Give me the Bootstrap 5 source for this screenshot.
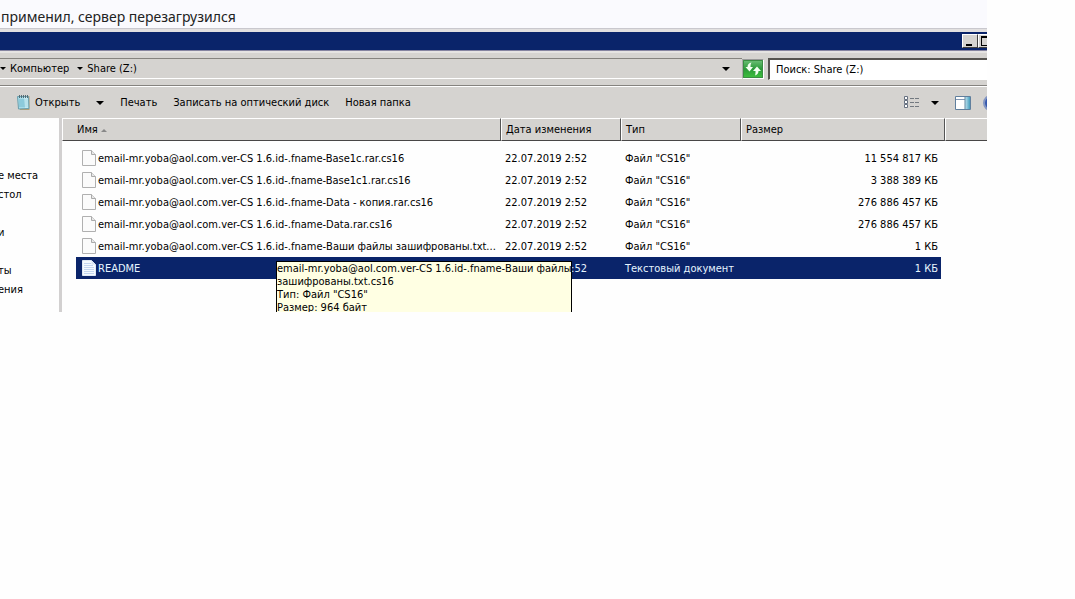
<!DOCTYPE html>
<html lang="ru">
<head>
<meta charset="utf-8">
<meta name="viewport" content="width=device-width, initial-scale=1">
<title>Share (Z:)</title>
<link rel="stylesheet" href="https://cdn.jsdelivr.net/npm/bootstrap@5.3.0/dist/css/bootstrap.min.css">
<script src="https://cdn.jsdelivr.net/npm/bootstrap@5.3.0/dist/js/bootstrap.bundle.min.js"></script>
<style>
  :root { --face: #d5d3d0; --navy: #0a246a; }
  body { background: #fefefe; color: #000; padding-right: 88px; font: 11px/13px "DejaVu Sans Condensed", "Noto Sans", sans-serif; }
  button { font: inherit; color: inherit; line-height: 13px; }
  .post-text { height: 28px; padding: 5px 1px 3px; background: #fafafe; color: #222; font: 14px/24px "Noto Sans", sans-serif; }
  .explorer { background: var(--face); border-top: 1px solid #c9c8ce; }
  .title-strip { height: 22px; background: var(--navy); border-top: 3px solid #e2e0e0; border-bottom: 1px solid #8584a0; box-sizing: border-box; }
  .win-btn { width: 16px; height: 14px; background: var(--face); border: 1px solid; border-color: #fff #404040 #404040 #fff; }
  .win-btn.cut { width: 9px; border-right: 0; }
  .address-row { height: 35px; border-top: 2px solid #e5e3e2; border-bottom: 1px solid #85837f; padding: 5px 0 6px; }
  .address-box { border-top: 1px solid #85837f; border-bottom: 1px solid #fff; }
  .plain-btn { background: none; border: 0; padding: 0; }
  .go-btn { width: 22px; height: 20px; border: 1px solid #fff; border-top-color: #999; border-left-color: #aaa; background: #fff; }
  .search-box { width: 219px; height: 22px; border: 1px solid #85837f; border-top: 2px solid #55534f; border-left: 2px solid #55534f; border-right: 0; border-bottom-color: #fff; border-radius: 0; padding: 0 6px; background: #fff; color: #000; font: inherit; }
  .search-box::placeholder { color: #000; opacity: 1; }
  .tool-row { height: 32px; border-top: 1px solid #fff; }
  .caret-down { width: 0; height: 0; border: 4px solid transparent; border-top-color: #000; border-bottom: 0; }
  .caret-down.tiny { border-width: 3px 3px 0; }
  .side-list { width: 59px; padding-top: 48px; background: #fefefe; line-height: 19px; }
  .side-list a { display: block; height: 19px; margin-left: -2px; color: #000; text-decoration: none; white-space: nowrap; }
  .file-pane { background: #fefefe; border-left: 3px solid #d2d0d0; padding-bottom: 33px; }
  .file-table { table-layout: fixed; border-collapse: separate; border-spacing: 0; }
  .file-table th { height: 23px; padding: 0 4px; font-weight: 400; background: var(--face); border: 1px solid; border-color: #fff #555 #484646 #fff; }
  .file-table th:first-child { padding-left: 14px; }
  .file-table th:last-child { border-right: 0; }
  .file-table td { height: 22px; padding: 0 4px; white-space: nowrap; overflow: hidden; text-overflow: ellipsis; }
  .file-table td.lead-gap { padding: 0; }
  .file-table td.size-cell { text-align: right; padding-right: 3px; }
  .file-table .spacer td { height: 6px; }
  .file-table .chosen td:not(.lead-gap) { background: var(--navy); color: #e6f4ff; }
  .file-table svg { display: inline-block; vertical-align: middle; }
  .file-table td svg { margin: 0 2px 0 6px; }
  .file-table td.name-cell { padding-left: 0; padding-right: 0; }
  .file-table td.name-cell > span { display: flex; align-items: center; }
  .file-tip { top: 143px; left: 214px; width: 296px; background: #ffffe3; border: 1px solid #000; padding-bottom: 8px; }
</style>
</head>
<body>
<svg width="0" height="0" class="position-absolute" aria-hidden="true">
  <symbol id="blank" viewBox="0 0 14 16"><path d="M.5.5h9l4 4v11H.5z" fill="#fbfbfb" stroke="#b0b0b0"/><path d="M9.500.5v4h4" fill="#e8e8e8" stroke="#aaa"/></symbol>
  <symbol id="text" viewBox="0 0 14 16"><path d="M.5.5h9l4 4v11H.5z" fill="#f4faff" stroke="#dfe9f5"/><path d="M2 3.500h7M2 5.500h9M2 7.500h10M2 9.500h10M2 11.500h10M2 13.500h10" stroke="#c3d6f0"/><path d="M9.500.5v4h4" fill="#d5e2f2"/></symbol>
</svg>
<p class="post-text mb-0 text-nowrap overflow-hidden">применил, сервер перезагрузился</p>
<main class="explorer">
  <div class="title-strip d-flex justify-content-end align-items-center overflow-hidden">
    <button class="win-btn p-0" aria-label="Свернуть"><svg class="d-block" width="14" height="12"><path d="M3 9h6v2H3z"/></svg></button>
    <button class="win-btn cut p-0 overflow-hidden" aria-label="Развернуть"><svg class="d-block" width="14" height="12"><path d="M2 1h10v10H2zM3 3v7h8V3z" fill-rule="evenodd"/></svg></button>
  </div>
  <div class="address-row d-flex align-items-stretch">
    <div class="address-box d-flex align-items-center flex-grow-1 gap-1 pe-2">
      <span class="caret-down tiny"></span>
      <button class="plain-btn">Компьютер</button>
      <span class="caret-down tiny ms-1"></span>
      <button class="plain-btn">Share (Z:)</button>
      <button class="plain-btn ms-auto me-1" aria-label="Предыдущие адреса"><span class="caret-down d-block"></span></button>
    </div>
    <button class="go-btn p-0 me-1 align-self-center" aria-label="Обновить"><svg class="d-block" width="20" height="18" viewBox="0 0 20 18"><defs><linearGradient id="g" x2="0" y2="1"><stop stop-color="#6fc078"/><stop offset=".5" stop-color="#2a9a38"/><stop offset="1" stop-color="#3fc23e"/></linearGradient></defs><path d="M0 0h20v18H0z" fill="url(#g)"/><path d="M.5.5h19v17H.5z" fill="none" stroke="#3b8c43"/><path d="M8.500 2.500C6 3 4.500 4.500 4.500 7H2.500l4 4.500L10 7H7.500c0-2 .2-3 1-4.500zM12 15.500c2.500-.8 3.500-2.500 3.500-4.500h2.500L14 6.500 10 11h2.500c0 2 0 3-.5 4.500z" fill="#f2fff0"/></svg></button>
    <input class="search-box flex-shrink-0" type="text" aria-label="Поиск" placeholder="Поиск: Share (Z:)">
  </div>
  <div class="tool-row d-flex align-items-center text-nowrap overflow-hidden">
    <button class="plain-btn d-flex align-items-center ms-3"><svg class="me-1" width="15" height="17" viewBox="0 0 15 17"><path d="M2 2h11.500v14H4z" fill="#b79f72"/><path d="M1.500 2.500h11l.5 12-10.500.5z" fill="#a6dbe8" stroke="#6b9fad"/><path d="M3 6h9M3 8h9M3 10h9M3 12h9" stroke="#72b9cc"/><path d="M8 3h4v11H9z" fill="#d5f2f7" opacity=".6"/><path d="M3.500 1v3M5.500 1v3M7.500 1v3M9.500 1v3M11.500 1v3" stroke="#536c75"/></svg>Открыть</button>
    <button class="plain-btn px-3" aria-label="Открыть с помощью"><span class="caret-down d-block"></span></button>
    <button class="plain-btn me-3">Печать</button>
    <button class="plain-btn me-3">Записать на оптический диск</button>
    <button class="plain-btn">Новая папка</button>
    <div class="d-flex align-items-center ms-auto">
      <button class="plain-btn" aria-label="Вид"><svg class="d-block" width="15" height="13" viewBox="0 0 15 13"><path d="M.5.5h3v3h-3zM.5 4.500h3v3h-3zM.5 8.500h3v3h-3z" fill="#fff" stroke="#667080"/><path d="M6 2.500h4m1 0h4M6 6.500h4m1 0h4M6 10.500h4m1 0h4" stroke="#737980"/></svg></button>
      <button class="plain-btn ps-2 pe-3 ms-1" aria-label="Другие виды"><span class="caret-down d-block"></span></button>
      <button class="plain-btn" aria-label="Область просмотра"><svg class="d-block" width="16" height="14" viewBox="0 0 16 14"><defs><linearGradient id="b"><stop stop-color="#c4e6f2"/><stop offset="1" stop-color="#459dbd"/></linearGradient></defs><path d="M.5.5h15v13H.5z" fill="#fff" stroke="#607f9d"/><path d="M1 3.500h9" stroke="#8398b4"/><path d="M10 1h5v12h-5z" fill="url(#b)"/><path d="M10 1v12" stroke="#60879f"/></svg></button>
      <button class="plain-btn ps-2 ms-1" aria-label="Справка"><svg class="d-block" width="4" height="16" viewBox="0 0 4 16"><circle cx="8" cy="8" r="7" fill="#3558ad" stroke="#8295c2" stroke-width="2"/></svg></button>
    </div>
  </div>
  <div class="d-flex">
    <nav class="side-list overflow-hidden flex-shrink-0" aria-label="Переходы">
      <a href="#">е места</a><a href="#">стол</a><a href="#" aria-label="Загрузки"></a><a href="#">и</a><a href="#" aria-label="Библиотеки"></a><a href="#">ты</a><a href="#">ения</a>
    </nav>
    <section class="file-pane position-relative overflow-hidden flex-grow-1">
      <table class="file-table w-100">
        <colgroup><col style="width:14px"><col><col style="width:120px"><col style="width:120px"><col style="width:200px"><col style="width:4px"><col style="width:42px"></colgroup>
        <thead><tr><th colspan="2">Имя <svg width="6" height="3"><path d="M0 3l3-3 3 3z" fill="#888"/></svg></th><th>Дата изменения</th><th>Тип</th><th colspan="2">Размер</th><th></th></tr></thead>
        <tbody>
          <tr class="spacer"><td colspan="7"></td></tr>
          <tr><td class="lead-gap"></td><td class="name-cell"><span><svg width="14" height="16"><use href="#blank"/></svg>email-mr.yoba@aol.com.ver-CS 1.6.id-.fname-Base1c.rar.cs16</span></td><td>22.07.2019 2:52</td><td>Файл "CS16"</td><td class="size-cell">11 554 817 КБ</td></tr>
          <tr><td class="lead-gap"></td><td class="name-cell"><span><svg width="14" height="16"><use href="#blank"/></svg>email-mr.yoba@aol.com.ver-CS 1.6.id-.fname-Base1c1.rar.cs16</span></td><td>22.07.2019 2:52</td><td>Файл "CS16"</td><td class="size-cell">3 388 389 КБ</td></tr>
          <tr><td class="lead-gap"></td><td class="name-cell"><span><svg width="14" height="16"><use href="#blank"/></svg>email-mr.yoba@aol.com.ver-CS 1.6.id-.fname-Data - копия.rar.cs16</span></td><td>22.07.2019 2:52</td><td>Файл "CS16"</td><td class="size-cell">276 886 457 КБ</td></tr>
          <tr><td class="lead-gap"></td><td class="name-cell"><span><svg width="14" height="16"><use href="#blank"/></svg>email-mr.yoba@aol.com.ver-CS 1.6.id-.fname-Data.rar.cs16</span></td><td>22.07.2019 2:52</td><td>Файл "CS16"</td><td class="size-cell">276 886 457 КБ</td></tr>
          <tr><td class="lead-gap"></td><td class="name-cell"><span><svg width="14" height="16"><use href="#blank"/></svg>email-mr.yoba@aol.com.ver-CS 1.6.id-.fname-Ваши файлы зашифрованы.txt...</span></td><td>22.07.2019 2:52</td><td>Файл "CS16"</td><td class="size-cell">1 КБ</td></tr>
          <tr class="chosen"><td class="lead-gap"></td><td class="name-cell"><span><svg width="14" height="16"><use href="#text"/></svg>README</span></td><td>22.07.2019 2:52</td><td>Текстовый документ</td><td class="size-cell">1 КБ</td></tr>
        </tbody>
      </table>
      <div class="file-tip position-absolute text-nowrap" role="tooltip">email-mr.yoba@aol.com.ver-CS 1.6.id-.fname-Ваши файлы<br>зашифрованы.txt.cs16<br>Тип: Файл "CS16"<br>Размер: 964 байт</div>
    </section>
  </div>
</main>
</body>
</html>
